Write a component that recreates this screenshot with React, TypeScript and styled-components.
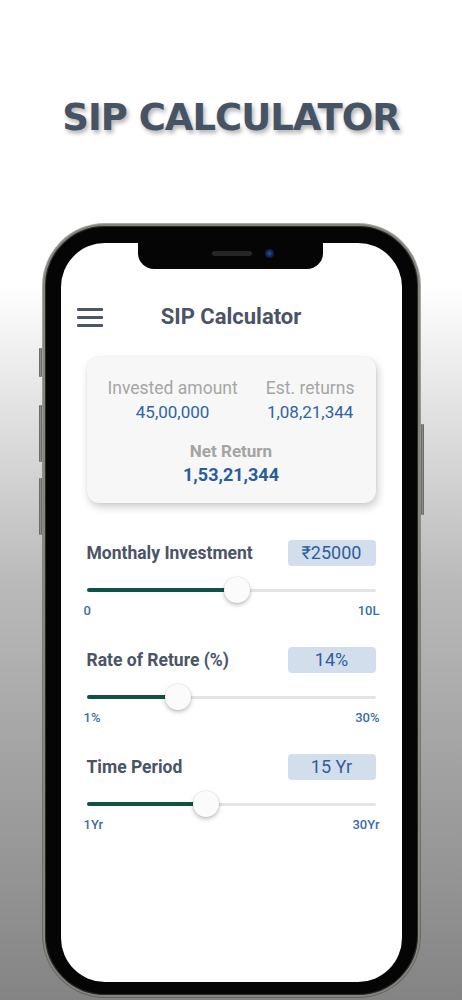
import React from "react";
import styled, { createGlobalStyle } from "styled-components";

const GlobalStyle = createGlobalStyle`
  html, body { margin: 0; padding: 0; }
  body { font-family: Roboto, "Liberation Sans", sans-serif; }
`;

const Page = styled.div`
  width: 462px;
  height: 1000px;
  overflow: hidden;
  display: flex;
  flex-direction: column;
  align-items: center;
  background: linear-gradient(to bottom, #ffffff 0%, #ffffff 28.5%, #bababa 58%, #848484 100%);
`;

const Headline = styled.h1`
  margin: 99px 0 0;
  font-family: "DejaVu Sans", sans-serif;
  font-weight: 700;
  font-size: 37px;
  line-height: 37px;
  letter-spacing: -1px;
  color: #465365;
  text-shadow: 2px 3px 4px rgba(0, 0, 0, 0.3);
`;

const Phone = styled.div`
  position: relative;
  margin-top: 88px;
  width: 377px;
  height: 773px;
  box-sizing: border-box;
  border-radius: 62px;
  background: #050505;
  border: 2px solid #85857e;
  box-shadow: inset 0 0 0 1px #2b2b2b, 0 0 0 1px rgba(60, 60, 55, 0.45);
  padding: 17px 16px 13px;
  flex-shrink: 0;
`;

const SideButton = styled.span<{ $side: "left" | "right"; $top: number; $h: number }>`
  position: absolute;
  ${(p) => (p.$side === "left" ? "left: -6px;" : "right: -6px;")}
  top: ${(p) => p.$top}px;
  height: ${(p) => p.$h}px;
  width: 3px;
  border-radius: 1px;
  background: linear-gradient(to right, #5e5e58, #8c8c86, #5e5e58);
`;

const Screen = styled.div`
  position: relative;
  width: 100%;
  height: 100%;
  box-sizing: border-box;
  background: #ffffff;
  border-radius: 44px;
  overflow: hidden;
  display: flex;
  flex-direction: column;
  padding-top: 60px;
`;

const Notch = styled.div`
  position: absolute;
  top: 0;
  left: 77px;
  width: 185px;
  height: 26px;
  box-sizing: border-box;
  padding: 0 0 6px 74px;
  background: #050505;
  border-radius: 0 0 16px 16px;
  display: flex;
  align-items: center;
  gap: 13px;
`;

const Speaker = styled.span`
  width: 40px;
  height: 5px;
  border-radius: 3px;
  background: #262626;
`;

const Camera = styled.span`
  width: 9px;
  height: 9px;
  border-radius: 50%;
  background: radial-gradient(circle at 50% 50%, #2c4fb0 0%, #17265a 45%, #0b0f1e 100%);
`;

const Header = styled.header`
  display: grid;
  grid-template-columns: 1fr auto 1fr;
  align-items: center;
  height: 28px;
  padding: 0 16px;
`;

const Burger = styled.div`
  display: flex;
  flex-direction: column;
  gap: 5px;
  width: 26px;
`;

const BurgerBar = styled.span`
  display: block;
  height: 3px;
  border-radius: 1px;
  background: #4b5567;
`;

const AppTitle = styled.h2`
  margin: 0;
  font-size: 22px;
  line-height: 28px;
  font-weight: 700;
  color: #4a5466;
`;

const Content = styled.main`
  display: flex;
  flex-direction: column;
  padding: 0 26px;
`;

const Card = styled.section`
  margin-top: 26px;
  padding: 19px 21px 16px;
  background: #f7f7f7;
  border-radius: 12px;
  box-shadow: 2px 4px 8px rgba(0, 0, 0, 0.2), 0 0 2px rgba(0, 0, 0, 0.08);
`;

const StatsRow = styled.div`
  display: flex;
  justify-content: space-between;
`;

const Stat = styled.div`
  text-align: center;
`;

const StatLabel = styled.div`
  font-size: 17.5px;
  line-height: 24px;
  color: #a6a6a6;
`;

const StatValue = styled.div`
  font-size: 17px;
  line-height: 24px;
  color: #2e64a3;
`;

const NetBlock = styled.div`
  margin-top: 15px;
  text-align: center;
`;

const NetLabel = styled.div`
  font-size: 17px;
  line-height: 24px;
  font-weight: 700;
  color: #a4a4a4;
`;

const NetValue = styled.div`
  font-size: 18px;
  line-height: 24px;
  font-weight: 700;
  color: #2a5d9a;
`;

const Sliders = styled.div`
  margin-top: 37px;
  display: flex;
  flex-direction: column;
  gap: 28px;
`;

const SliderBlock = styled.div`
  display: flex;
  flex-direction: column;
`;

const SliderHead = styled.div`
  display: flex;
  justify-content: space-between;
  align-items: center;
  height: 26px;
`;

const SliderLabel = styled.span`
  font-size: 17.5px;
  line-height: 26px;
  font-weight: 700;
  color: #4a5466;
`;

const ValueBox = styled.span`
  width: 88px;
  height: 26px;
  border-radius: 4px;
  background: #d3deec;
  color: #2d5e9b;
  font-size: 18px;
  line-height: 26px;
  text-align: center;
`;

const Track = styled.div`
  position: relative;
  margin-top: 11px;
  height: 26px;
`;

const Rail = styled.div`
  position: absolute;
  left: 0;
  right: 0;
  top: 12px;
  height: 3px;
  border-radius: 2px;
  background: #e4e4e4;
`;

const Fill = styled.div`
  position: absolute;
  left: 0;
  top: 11px;
  height: 4px;
  border-radius: 2px;
  background: #0e5246;
`;

const Thumb = styled.div`
  position: absolute;
  top: 0;
  width: 26px;
  height: 26px;
  margin-left: -13px;
  border-radius: 50%;
  background: #fbfbfb;
  box-shadow: 0 2px 4px rgba(0, 0, 0, 0.25), 0 0 0 0.5px rgba(0, 0, 0, 0.08);
`;

const RangeLabels = styled.div`
  display: flex;
  justify-content: space-between;
  margin: 0 -4px 0 -3px;
  font-size: 13px;
  line-height: 16px;
  font-weight: 500;
  color: #3a6ea9;
`;

type SliderData = { label: string; value: string; pct: number; min: string; max: string };

const sliders: SliderData[] = [
  { label: "Monthaly Investment", value: "₹25000", pct: 52, min: "0", max: "10L" },
  { label: "Rate of Reture (%)", value: "14%", pct: 31.7, min: "1%", max: "30%" },
  { label: "Time Period", value: "15 Yr", pct: 41.4, min: "1Yr", max: "30Yr" },
];

export default function App() {
  return (
    <>
      <GlobalStyle />
      <Page>
        <Headline>SIP CALCULATOR</Headline>
        <Phone>
          <SideButton $side="left" $top={122} $h={29} />
          <SideButton $side="left" $top={179} $h={57} />
          <SideButton $side="left" $top={252} $h={57} />
          <SideButton $side="right" $top={198} $h={91} />
          <Screen>
            <Notch>
              <Speaker />
              <Camera />
            </Notch>
            <Header>
              <Burger>
                <BurgerBar />
                <BurgerBar />
                <BurgerBar />
              </Burger>
              <AppTitle>SIP Calculator</AppTitle>
              <span />
            </Header>
            <Content>
              <Card>
                <StatsRow>
                  <Stat>
                    <StatLabel>Invested amount</StatLabel>
                    <StatValue>45,00,000</StatValue>
                  </Stat>
                  <Stat>
                    <StatLabel>Est. returns</StatLabel>
                    <StatValue>1,08,21,344</StatValue>
                  </Stat>
                </StatsRow>
                <NetBlock>
                  <NetLabel>Net Return</NetLabel>
                  <NetValue>1,53,21,344</NetValue>
                </NetBlock>
              </Card>
              <Sliders>
                {sliders.map((s) => (
                  <SliderBlock key={s.label}>
                    <SliderHead>
                      <SliderLabel>{s.label}</SliderLabel>
                      <ValueBox>{s.value}</ValueBox>
                    </SliderHead>
                    <Track>
                      <Rail />
                      <Fill style={{ width: `${s.pct}%` }} />
                      <Thumb style={{ left: `${s.pct}%` }} />
                    </Track>
                    <RangeLabels>
                      <span>{s.min}</span>
                      <span>{s.max}</span>
                    </RangeLabels>
                  </SliderBlock>
                ))}
              </Sliders>
            </Content>
          </Screen>
        </Phone>
      </Page>
    </>
  );
}
